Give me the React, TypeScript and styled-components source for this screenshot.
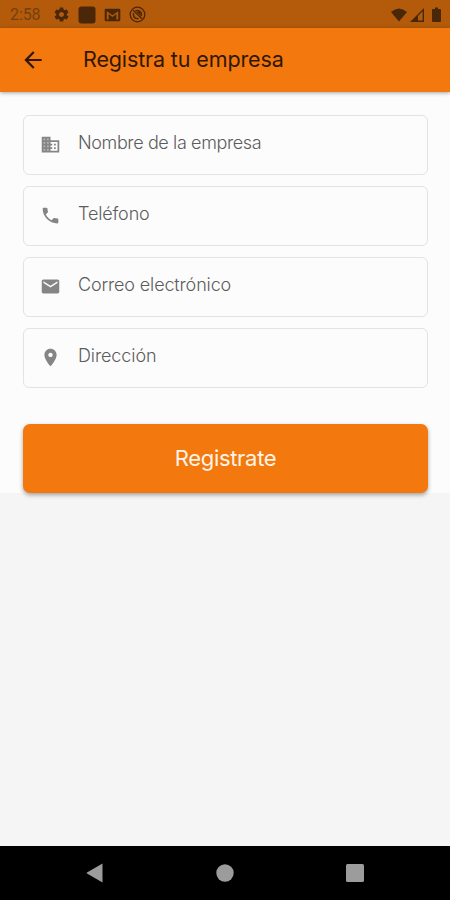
import React from "react";
import styled, { createGlobalStyle } from "styled-components";

const GlobalStyle = createGlobalStyle`
  * { box-sizing: border-box; }
  body { margin: 0; background: #f5f5f5; font-family: Inter, "Open Sans", sans-serif; }
`;

const Screen = styled.div`
  width: 450px;
  height: 900px;
  display: flex;
  flex-direction: column;
  background: #f5f5f5;
  overflow: hidden;
`;

const StatusBar = styled.header`
  height: 28px;
  flex: none;
  display: flex;
  align-items: center;
  padding: 1px 6px 0 10px;
  background: #b35b0a;
  color: #4a2708;
`;

const Clock = styled.span`
  width: 43px;
  font: 400 16px/20px Roboto, sans-serif;
  letter-spacing: -0.1px;
  color: #75400f;
`;

const Notifications = styled.div`
  display: flex;
  align-items: center;
  gap: 8px;
  flex: 1;
`;

const Indicators = styled.div`
  display: flex;
  align-items: center;
  gap: 3px;
`;

const AppBar = styled.div`
  height: 64px;
  flex: none;
  display: flex;
  align-items: center;
  padding-left: 20px;
  background: #f3790f;
  color: #301703;
  box-shadow: 0 1px 4px rgba(0, 0, 0, 0.35);
  z-index: 1;
`;

const BackButton = styled.button`
  width: 63px;
  height: 26px;
  padding: 0;
  border: 0;
  background: none;
  color: inherit;
  text-align: left;
`;

const Title = styled.h1`
  margin: 0;
  padding-bottom: 3px;
  font-size: 21.5px;
  font-weight: 400;
  line-height: 28px;
  letter-spacing: -0.13px;
  white-space: nowrap;
`;

const Form = styled.form`
  height: 401px;
  flex: none;
  display: flex;
  flex-direction: column;
  gap: 11px;
  padding: 23px 22px 0 23px;
  background: #fcfcfc;
`;

const Field = styled.label`
  height: 60px;
  flex: none;
  display: flex;
  align-items: center;
  padding-left: 16px;
  border: 1px solid #e3e3e3;
  border-radius: 6px;
  color: #858585;
`;

const FieldIcon = styled.span`
  width: 38px;
  height: 22px;
`;

const Placeholder = styled.span<{ $tracking: number }>`
  padding-bottom: 4px;
  font-size: 18px;
  font-weight: 300;
  line-height: 24px;
  letter-spacing: ${({ $tracking }) => $tracking}px;
  color: #5c5c5c;
  white-space: nowrap;
`;

const SubmitButton = styled.button`
  height: 69px;
  flex: none;
  margin-top: 25px;
  padding: 0 0 2px;
  border: 0;
  border-radius: 7px;
  background: #f3790f;
  box-shadow: 0 2px 4px rgba(0, 0, 0, 0.35);
  color: #fff3e6;
  font: 400 22px/28px Inter, sans-serif;
  letter-spacing: -0.3px;
`;

const Blank = styled.main`
  flex: 1;
`;

const NavigationBar = styled.nav`
  height: 54px;
  flex: none;
  display: grid;
  grid-template-columns: repeat(3, 130px);
  justify-content: center;
  align-items: center;
  justify-items: center;
  background: #000;
  color: #9c9c9c;
`;

const Glyph = styled.svg`
  display: block;
  fill: currentColor;
`;

type IconProps = { size: number; d: string; muted?: string };

const Icon = ({ size, d, muted }: IconProps) => (
  <Glyph width={size} height={size} viewBox="0 0 24 24">
    {muted && <path d={muted} opacity="0.6" />}
    <path d={d} />
  </Glyph>
);

const paths = {
  back: "M20 11H7.83l5.59-5.59L12 4l-8 8 8 8 1.41-1.41L7.83 13H20v-2z",
  business:
    "M12 7V3H2v18h20V7H12zM6 19H4v-2h2v2zm0-4H4v-2h2v2zm0-4H4V9h2v2zm0-4H4V5h2v2zm4 12H8v-2h2v2zm0-4H8v-2h2v2zm0-4H8V9h2v2zm0-4H8V5h2v2zm10 12h-8v-2h2v-2h-2v-2h2v-2h-2V9h8v10zm-2-8h-2v2h2v-2zm0 4h-2v2h2v-2z",
  businessWindows: "M3 4h8v16H3z",
  phone:
    "M6.62 10.79c1.44 2.83 3.76 5.14 6.59 6.59l2.2-2.2c.27-.27.67-.36 1.02-.24 1.12.37 2.33.57 3.57.57.55 0 1 .45 1 1V20c0 .55-.45 1-1 1-9.39 0-17-7.61-17-17 0-.55.45-1 1-1h3.5c.55 0 1 .45 1 1 0 1.25.2 2.45.57 3.57.11.35.03.74-.25 1.02l-2.2 2.2z",
  mail: "M20 4H4c-1.1 0-1.99.9-1.99 2L2 18c0 1.1.9 2 2 2h16c1.1 0 2-.9 2-2V6c0-1.1-.9-2-2-2zm0 4l-8 5-8-5V6l8 5 8-5v2z",
  place:
    "M12 2C8.13 2 5 5.13 5 9c0 5.25 7 13 7 13s7-7.75 7-13c0-3.87-3.13-7-7-7zm0 9.5c-1.38 0-2.5-1.12-2.5-2.5s1.12-2.5 2.5-2.5 2.5 1.12 2.5 2.5-1.12 2.5-2.5 2.5z",
  settings:
    "M19.43 12.98c.04-.32.07-.64.07-.98s-.03-.66-.07-.98l2.11-1.65c.19-.15.24-.42.12-.64l-2-3.46c-.12-.22-.39-.3-.61-.22l-2.49 1c-.52-.4-1.08-.73-1.69-.98l-.38-2.65C14.46 2.18 14.25 2 14 2h-4c-.25 0-.46.18-.49.42l-.38 2.65c-.61.25-1.17.59-1.69.98l-2.49-1c-.23-.09-.49 0-.61.22l-2 3.46c-.13.22-.07.49.12.64l2.11 1.65c-.04.32-.07.65-.07.98s.03.66.07.98l-2.11 1.65c-.19.15-.24.42-.12.64l2 3.46c.12.22.39.3.61.22l2.49-1c.52.4 1.08.73 1.69.98l.38 2.65c.03.24.24.42.49.42h4c.25 0 .46-.18.49-.42l.38-2.65c.61-.25 1.17-.59 1.69-.98l2.49 1c.23.09.49 0 .61-.22l2-3.46c.12-.22.07-.49-.12-.64l-2.11-1.65zM12 15.5c-1.93 0-3.5-1.57-3.5-3.5s1.57-3.5 3.5-3.5 3.5 1.57 3.5 3.5-1.57 3.5-3.5 3.5z",
};

const fields = [
  { label: "Nombre de la empresa", icon: paths.business, muted: paths.businessWindows, tracking: -0.38 },
  { label: "Teléfono", icon: paths.phone, tracking: -0.15 },
  { label: "Correo electrónico", icon: paths.mail, tracking: -0.14 },
  { label: "Dirección", icon: paths.place, tracking: -0.1 },
];

export default function App() {
  return (
    <>
      <GlobalStyle />
      <Screen>
        <StatusBar>
          <Clock>2:58</Clock>
          <Notifications>
            <Icon size={17} d={paths.settings} />
            <Glyph width="18" height="18" viewBox="0 0 18 18">
              <rect x="0.5" y="0.5" width="17" height="17" rx="3" />
            </Glyph>
            <Glyph width="17" height="14" viewBox="0 0 17 14">
              <path
                fillRule="evenodd"
                d="M2 .8h13q1.300 0 1.300 1.300v9.800q0 1.300-1.300 1.300H2Q.7 13.200.7 11.900V2.100Q.7.8 2 .8ZM2.800 3.200v8.300h1.800V6l3.900 2.900L12.400 6v5.500h1.800V3.200L8.500 7.200Z"
              />
            </Glyph>
            <Glyph width="17" height="17" viewBox="0 0 17 17">
              <circle cx="8.500" cy="8.500" r="7.300" fill="none" stroke="currentColor" strokeWidth="1.300" />
              <path d="M4.200 4.200 13 12.800M4.500 7v2.500a4 4 0 0 0 5 3M6.500 4.900a4.200 4.200 0 0 1 5.800 5" fill="none" stroke="currentColor" strokeWidth="1.400" />
              <path d="M7 5.500h4l1 4.500Z" />
            </Glyph>
          </Notifications>
          <Indicators>
            <Glyph width="16" height="14" viewBox="0 0 16 14">
              <path d="M0 4Q8-3 16 4L8 13.500Z" />
            </Glyph>
            <Glyph width="15" height="14" viewBox="0 0 15 14">
              <path fillRule="evenodd" d="M0 14 14 0v14ZM8 7.900V12.500h4.600V3.300Z" />
            </Glyph>
            <Glyph width="16" height="16" viewBox="0 0 16 16">
              <path d="M5 2h2V.5h3V2h2q1 0 1 1v11q0 1-1 1H5q-1 0-1-1V3q0-1 1-1Z" />
            </Glyph>
          </Indicators>
        </StatusBar>
        <AppBar>
          <BackButton type="button" aria-label="Atrás">
            <Icon size={26} d={paths.back} />
          </BackButton>
          <Title>Registra tu empresa</Title>
        </AppBar>
        <Form>
          {fields.map(({ label, icon, muted, tracking }) => (
            <Field key={label}>
              <FieldIcon>
                <Icon size={21} d={icon} muted={muted} />
              </FieldIcon>
              <Placeholder $tracking={tracking}>{label}</Placeholder>
            </Field>
          ))}
          <SubmitButton type="button">Registrate</SubmitButton>
        </Form>
        <Blank />
        <NavigationBar>
          <Glyph width="18" height="20" viewBox="0 0 18 20">
            <path d="M1 9.500Q0 10 1 10.500L16.500 19.500V.5Z" />
          </Glyph>
          <Glyph width="18" height="18" viewBox="0 0 18 18">
            <circle cx="9" cy="9" r="8.700" />
          </Glyph>
          <Glyph width="18" height="18" viewBox="0 0 18 18">
            <rect width="18" height="18" rx="1.500" />
          </Glyph>
        </NavigationBar>
      </Screen>
    </>
  );
}
